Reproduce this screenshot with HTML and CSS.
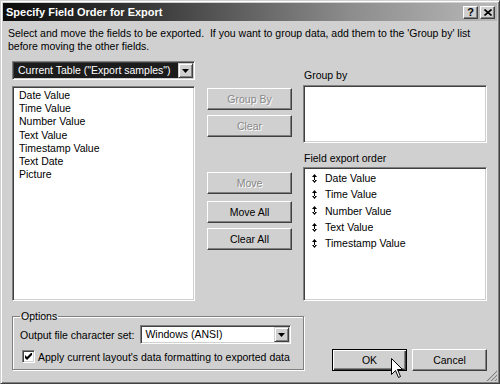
FILE: index.html
```html
<!DOCTYPE html>
<html lang="en">

<head>
    <meta charset="UTF-8" />
    <title>Specify Field Order for Export</title>
    <link rel="stylesheet" href="styles.css">
</head>

<body>

    <div class="window">
        <div class="titlebar">
            <span class="title">Specify Field Order for Export</span>
            <div class="caption-buttons">
                <span class="cap-btn help">?</span>
                <span class="cap-btn">
                    <svg width="8" height="7" viewBox="0 0 8 7"><path d="M0.5 0.5 L7.5 6.5 M7.5 0.5 L0.5 6.5" stroke="#000" stroke-width="1.6" /></svg>
                </span>
            </div>
        </div>

        <div class="content">
            <p class="intro">Select and move the fields to be exported.&nbsp; If you want to group data, add them to the 'Group by' list<br>before moving the other fields.</p>

            <div class="panels">
                <div class="col-left">
                    <div class="combo dark">
                        <span class="combo-text">Current Table ("Export samples")</span>
                        <span class="combo-btn">
                            <svg width="7" height="4" viewBox="0 0 7 4"><polygon points="0,0 7,0 3.5,4" fill="#000" /></svg>
                        </span>
                    </div>
                    <ul class="listbox fields">
                        <li>Date Value</li>
                        <li>Time Value</li>
                        <li>Number Value</li>
                        <li>Text Value</li>
                        <li>Timestamp Value</li>
                        <li>Text Date</li>
                        <li>Picture</li>
                    </ul>
                </div>

                <div class="col-mid">
                    <button class="btn" disabled>Group By</button>
                    <button class="btn gap-s" disabled>Clear</button>
                    <button class="btn gap-l" disabled>Move</button>
                    <button class="btn gap-m">Move All</button>
                    <button class="btn gap-s">Clear All</button>
                </div>

                <div class="col-right">
                    <div class="label first">Group by</div>
                    <div class="listbox group-box"></div>
                    <div class="label second">Field export order</div>
                    <ul class="listbox order">
                        <li><svg class="mover" width="5" height="9" viewBox="0 0 5 9"><path d="M0 3 L2.5 0 L5 3 Z M0 6 L2.5 9 L5 6 Z M2 2 H3 V7 H2 Z" fill="#000" /></svg>Date Value</li>
                        <li><svg class="mover" width="5" height="9" viewBox="0 0 5 9"><path d="M0 3 L2.5 0 L5 3 Z M0 6 L2.5 9 L5 6 Z M2 2 H3 V7 H2 Z" fill="#000" /></svg>Time Value</li>
                        <li><svg class="mover" width="5" height="9" viewBox="0 0 5 9"><path d="M0 3 L2.5 0 L5 3 Z M0 6 L2.5 9 L5 6 Z M2 2 H3 V7 H2 Z" fill="#000" /></svg>Number Value</li>
                        <li><svg class="mover" width="5" height="9" viewBox="0 0 5 9"><path d="M0 3 L2.5 0 L5 3 Z M0 6 L2.5 9 L5 6 Z M2 2 H3 V7 H2 Z" fill="#000" /></svg>Text Value</li>
                        <li><svg class="mover" width="5" height="9" viewBox="0 0 5 9"><path d="M0 3 L2.5 0 L5 3 Z M0 6 L2.5 9 L5 6 Z M2 2 H3 V7 H2 Z" fill="#000" /></svg>Timestamp Value</li>
                    </ul>
                </div>
            </div>

            <div class="bottom">
                <fieldset class="options">
                    <legend>Options</legend>
                    <div class="charset-row">
                        <span class="charset-label">Output file character set:</span>
                        <div class="combo light">
                            <span class="combo-text">Windows (ANSI)</span>
                            <span class="combo-btn">
                                <svg width="7" height="4" viewBox="0 0 7 4"><polygon points="0,0 7,0 3.5,4" fill="#000" /></svg>
                            </span>
                        </div>
                    </div>
                    <div class="check-row">
                        <span class="checkbox">
                            <svg width="7" height="7" viewBox="0 0 7 7"><path d="M0 2 L2 4 L7 -1 V2 L2 7 L0 5 Z" fill="#000" /></svg>
                        </span>
                        <span>Apply current layout's data formatting to exported data</span>
                    </div>
                </fieldset>

                <div class="dialog-buttons">
                    <button class="btn default">OK</button>
                    <button class="btn">Cancel</button>
                </div>
            </div>
        </div>

        <svg class="cursor" width="13" height="21" viewBox="0 0 13 21">
            <path d="M0.5 0.5 V16.5 L4.5 12.5 L7.5 19.5 L9.5 18.5 L6.5 11.5 H11.5 Z" fill="#fff" stroke="#000" stroke-width="1" />
        </svg>

        <svg class="grip" width="11" height="11" viewBox="0 0 11 11">
            <path d="M10 1 L1 10 M10 5 L5 10 M10 9 L9 10" stroke="#fff" stroke-width="1" />
            <path d="M11 1 L1 11 M11 5 L5 11 M11 9 L9 11" stroke="#808080" stroke-width="1.2" />
        </svg>
    </div>

</body>

</html>
```

FILE: styles.css
```css
body {
    margin: 0;
    padding: 0;
    background: #d0d0d0;
    font-family: "Liberation Sans", Arial, sans-serif;
    font-size: 10.5px;
    color: #000;
}

.window {
    position: relative;
    width: 500px;
    height: 384px;
    box-sizing: border-box;
    border: 1px solid;
    border-color: #d0d0d0 #404040 #404040 #d0d0d0;
    box-shadow: inset 1px 1px #fff, inset -1px -1px #808080;
    padding: 2px;
    background: #d0d0d0;
}

.titlebar {
    height: 18px;
    display: flex;
    align-items: center;
    justify-content: space-between;
    background: linear-gradient(to right, #0c0c0c 0%, #3a3a3a 30%, #8c8c8c 70%, #b8b8b8 100%);
    padding: 0 2px 0 3px;
}

.title {
    color: #fff;
    font-weight: bold;
    font-size: 11px;
}

.caption-buttons {
    display: flex;
    gap: 2px;
}

.cap-btn {
    width: 15px;
    height: 13px;
    box-sizing: border-box;
    background: #d0d0d0;
    border: 1px solid;
    border-color: #fff #404040 #404040 #fff;
    box-shadow: inset -1px -1px #808080;
    display: flex;
    align-items: center;
    justify-content: center;
    font-weight: bold;
    font-size: 11px;
    line-height: 1;
}

.content {
    padding-left: 5px;
}

.intro {
    margin: 6px 0 0;
    line-height: 13px;
    white-space: nowrap;
}

.panels {
    display: flex;
    margin: 8px 0 0 4px;
    height: 240px;
}

.col-left {
    width: 183px;
    display: flex;
    flex-direction: column;
}

.col-mid {
    width: 85px;
    margin: 0 11px 0 12px;
    padding-top: 27px;
    display: flex;
    flex-direction: column;
}

.col-right {
    width: 184px;
    display: flex;
    flex-direction: column;
}

/* sunken 3d frames */
.listbox,
.combo,
.checkbox {
    box-sizing: border-box;
    border: 1px solid;
    border-color: #808080 #fff #fff #808080;
    box-shadow: inset 1px 1px #404040, inset -1px -1px #d0d0d0;
    background: #fff;
}

.combo {
    display: flex;
    height: 19px;
    padding: 1px;
}

.combo-text {
    flex: 1;
    line-height: 15px;
    padding-left: 3px;
    white-space: nowrap;
    overflow: hidden;
}

.combo.dark .combo-text {
    background: #1c1c1c;
    color: #fff;
    padding-left: 4px;
}

.combo-btn {
    width: 15px;
    box-sizing: border-box;
    background: #d0d0d0;
    border: 1px solid;
    border-color: #d0d0d0 #404040 #404040 #d0d0d0;
    box-shadow: inset 1px 1px #fff, inset -1px -1px #808080;
    display: flex;
    align-items: center;
    justify-content: center;
}

ul.listbox {
    list-style: none;
    margin: 0;
}

.fields {
    margin-top: 6px !important;
    flex: 1;
    padding: 2px 0 0 6px;
    line-height: 13.2px;
}

.label {
    line-height: 12px;
    padding-left: 1px;
}

.label.first {
    margin-top: 8px;
}

.label.second {
    margin-top: 9px;
}

.group-box {
    margin-top: 4px;
    height: 58px;
}

.order {
    margin-top: 3px !important;
    flex: 1;
    padding: 2px 0 0 8px;
    line-height: 16.3px;
}

.order li {
    display: flex;
    align-items: center;
}

.mover {
    margin-right: 8px;
}

.btn {
    height: 22px;
    box-sizing: border-box;
    background: #d0d0d0;
    border: 1px solid;
    border-color: #fff #404040 #404040 #fff;
    box-shadow: inset -1px -1px #808080;
    font-family: "Liberation Sans", Arial, sans-serif;
    font-size: 10.5px;
    color: #000;
    padding: 0;
}

.btn:disabled {
    color: #888;
    text-shadow: 1px 1px #fff;
}

.gap-s {
    margin-top: 5px;
}

.gap-m {
    margin-top: 7px;
}

.gap-l {
    margin-top: 35px;
}

.bottom {
    display: flex;
    align-items: flex-end;
    margin-left: 4px;
}

.options {
    width: 292px;
    flex: none;
    box-sizing: border-box;
    margin: 9px 0 0;
    padding: 3px 7px 6px 7px;
    border: 1px solid #808080;
    box-shadow: inset 1px 1px #fff, 1px 1px #fff;
    white-space: nowrap;
}

.options legend {
    padding: 0 1px;
    margin-left: 0;
    line-height: 12px;
}

.charset-row {
    display: flex;
    align-items: center;
    gap: 6px;
}

.charset-row .combo {
    width: 151px;
}

.check-row {
    display: flex;
    align-items: center;
    gap: 3px;
    margin-top: 6px;
    padding-left: 2px;
}

.checkbox {
    width: 13px;
    height: 13px;
    flex: none;
    display: flex;
    align-items: center;
    justify-content: center;
}

.dialog-buttons {
    display: flex;
    gap: 5px;
    margin: 0 0 -1px 28px;
}

.dialog-buttons .btn {
    width: 75px;
    height: 22px;
}

.btn.default {
    border: 1px solid #000;
    box-shadow: inset 1px 1px #fff, inset -1px -1px #404040, inset -2px -2px #808080;
}

.cursor {
    position: absolute;
    left: 390px;
    top: 357px;
}

.grip {
    position: absolute;
    right: 2px;
    bottom: 2px;
}
```
